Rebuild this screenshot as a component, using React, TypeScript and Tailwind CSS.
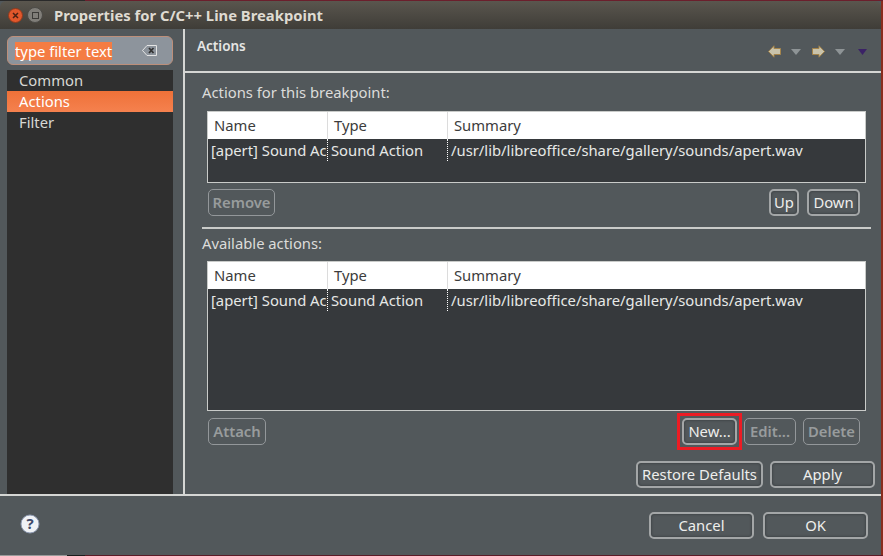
const font = { fontFamily: '"Noto Sans", "Open Sans", sans-serif' };

function Btn({ label, w, disabled }: { label: string; w: string; disabled?: boolean }) {
  return (
    <button
      className={`${w} h-[27px] rounded-[5px] text-[14.8px] leading-none flex items-center justify-center ${
        disabled
          ? "border border-[#93979a] text-[#989c9d] font-semibold"
          : "border-2 border-[#a3a6a7] text-[#eeeeec] shadow-[inset_0_0_3px_rgba(0,0,0,0.4)]"
      }`}
    >
      {label}
    </button>
  );
}

function ActionsTable({ height }: { height: string }) {
  return (
    <div className={`${height} border border-[#c9cbc9] bg-[#36393c] flex flex-col text-[14.8px]`}>
      <div className="h-[27px] bg-white text-[#3c3c3c] flex items-center shrink-0">
        <div className="w-[120px] pl-[6px] border-r border-[#dcdcdc] h-full flex items-center">Name</div>
        <div className="w-[120px] pl-[6px] border-r border-[#dcdcdc] h-full flex items-center">Type</div>
        <div className="pl-[6px]">Summary</div>
      </div>
      <div className="h-[22px] text-[#e6e8e6] flex leading-[22px]">
        <div className="w-[120px] pl-[3px] h-full whitespace-nowrap border-r border-dotted border-white">[apert] Sound Ac</div>
        <div className="w-[120px] pl-[3px] h-full border-r border-dotted border-white">Sound Action</div>
        <div className="pl-[3px]">/usr/lib/libreoffice/share/gallery/sounds/apert.wav</div>
      </div>
    </div>
  );
}

function ArrowIcon({ flip }: { flip?: boolean }) {
  return (
    <svg width="13" height="13" viewBox="0 0 13 13" className={flip ? "" : "-scale-x-100"}>
      <path d="M.5 3.5H7V.8L12.5 6.5L7 12.2V9.5H.5Z" fill="#c9c3ab" stroke="#a5844a" />
    </svg>
  );
}

function Caret({ color, w = 10 }: { color: string; w?: number }) {
  return (
    <svg width={w} height="6" viewBox="0 0 10 6" preserveAspectRatio="none">
      <path d="M0 0H10L5 6Z" fill={color} />
    </svg>
  );
}

export default function App() {
  return (
    <div className="w-[883px] h-[556px] bg-[#8a2c1e] overflow-hidden flex flex-col" style={font}>
      <div className="h-[1px] shrink-0 flex">
        <div className="w-[85px] bg-[#2a2a2a]" />
        <div className="flex-1 bg-[#6b1f2c]" />
      </div>
      <div className="h-[554px] shrink-0 mr-[2px] flex flex-col bg-[#52585b]">
        <div className="h-[28px] shrink-0 flex items-center bg-gradient-to-b from-[#5a564e] to-[#3f3d38] rounded-t-[6px] pl-[8px]">
          <div className="w-[15px] h-[15px] rounded-full bg-[#e2572b] border border-[#8d3a1e] flex items-center justify-center">
            <svg width="7" height="7" viewBox="0 0 7 7">
              <path d="M1 1L6 6M6 1L1 6" stroke="#4a2114" strokeWidth="1.5" />
            </svg>
          </div>
          <div className="w-[16px] h-[16px] ml-[4px] rounded-full bg-[#807e79] border border-[#4b4a46] flex items-center justify-center">
            <div className="w-[7px] h-[7px] border border-[#3c3b38]" />
          </div>
          <div className="ml-[11px] text-[14.8px] font-bold text-[#dfdbd2]">Properties for C/C++ Line Breakpoint</div>
        </div>

        <div className="flex flex-1 min-h-0">
          <div className="w-[183px] shrink-0 pl-[7px] pr-[10px] pt-[7px] flex flex-col">
            <div className="h-[29px] shrink-0 rounded-[6px] border border-[#bd8f7a] bg-[#8d949c] flex items-center pl-[7px] pr-[15px] justify-between">
              <span className="bg-[#f47c43] text-white text-[14.8px] leading-[18px]">type filter text</span>
              <svg width="15" height="11" viewBox="0 0 15 11">
                <path d="M5 .5H14.5V10.5H5L.5 5.5Z" fill="none" stroke="#e4e4e4" />
                <path d="M7 3L11.5 8M11.5 3L7 8" stroke="#333" strokeWidth="1.8" />
              </svg>
            </div>
            <div className="mt-[5px] flex-1 bg-[#2f2f2f] text-[14.8px] text-[#d8d8d4]">
              <div className="h-[21px] pl-[12px] flex items-center">Common</div>
              <div className="h-[21px] pl-[12px] flex items-center bg-gradient-to-b from-[#ee7138] to-[#f5814e] text-white">Actions</div>
              <div className="h-[21px] pl-[12px] flex items-center">Filter</div>
            </div>
          </div>
          <div className="w-[2px] shrink-0 bg-[#d5d6d4]" />

          <div className="flex-1 min-w-0 flex flex-col">
            <div className="h-[44px] shrink-0 border-b-2 border-[#d5d6d4] flex justify-between pl-[12px] pr-[14px] pt-[8px]">
              <span className="text-[13.5px] font-semibold text-[#e6e6e4] leading-[18px]">Actions</span>
              <div className="flex items-center h-[13px] mt-[8px]">
                <ArrowIcon />
                <span className="ml-[10px] flex"><Caret color="#8e9496" /></span>
                <span className="ml-[11px] flex"><ArrowIcon flip /></span>
                <span className="ml-[10px] flex"><Caret color="#8e9496" /></span>
                <span className="ml-[13px] flex"><Caret color="#3b2266" w={9} /></span>
              </div>
            </div>

            <div className="flex-1 min-h-0 pl-[17px] pr-[10px] flex flex-col">
              <div className="text-[14.8px] text-[#dcdcda] h-[20px] mt-[9px] leading-[20px]">Actions for this breakpoint:</div>
              <div className="mt-[9px] ml-[5px] mr-[5px]">
                <ActionsTable height="h-[72px]" />
              </div>
              <div className="mt-[6px] ml-[6px] mr-[11px] flex items-center">
                <Btn label="Remove" w="w-[67px]" disabled />
                <div className="ml-auto flex gap-[8px]">
                  <Btn label="Up" w="w-[30px]" />
                  <Btn label="Down" w="w-[53px]" />
                </div>
              </div>
              <div className="h-[2px] bg-[#c9cbc9] mt-[11px]" />
              <div className="text-[14.8px] text-[#dcdcda] h-[20px] mt-[4px] leading-[20px]">Available actions:</div>
              <div className="mt-[8px] ml-[5px] mr-[5px]">
                <ActionsTable height="h-[150px]" />
              </div>
              <div className="mt-[7px] ml-[6px] mr-[11px] flex items-center">
                <Btn label="Attach" w="w-[58px]" disabled />
                <div className="ml-auto flex gap-[7px]">
                  <div className="relative">
                    <Btn label="New..." w="w-[55px]" />
                    <div className="absolute -left-[5px] -top-[5px] w-[65px] h-[37px] border-[3px] border-[#ec1c24]" />
                  </div>
                  <Btn label="Edit..." w="w-[52px]" disabled />
                  <Btn label="Delete" w="w-[57px]" disabled />
                </div>
              </div>
              <div className="mt-[16px] flex justify-end gap-[7px] mr-[-4px]">
                <Btn label="Restore Defaults" w="w-[127px]" />
                <Btn label="Apply" w="w-[105px]" />
              </div>
            </div>
          </div>
        </div>

        <div className="h-[61px] shrink-0 border-t-2 border-[#d5d6d4] flex items-center pl-[20px] pr-[13px]">
          <svg width="20" height="20" viewBox="0 0 20 20" className="mb-[3px]">
            <circle cx="10" cy="10" r="9" fill="#f0f2f6" stroke="#8f9bb3" />
            <text x="10" y="15" textAnchor="middle" fontSize="15" fontWeight="700" fill="#3f4a6b">?</text>
          </svg>
          <div className="ml-auto flex gap-[9px]">
            <Btn label="Cancel" w="w-[105px]" />
            <Btn label="OK" w="w-[105px]" />
          </div>
        </div>
      </div>
      <div className="h-[1px] shrink-0 flex">
        <div className="w-[67px] bg-[#9a9a9a]" />
        <div className="w-[18px] bg-[#1c1c1c]" />
        <div className="flex-1 bg-[#5c1a26]" />
      </div>
    </div>
  );
}
